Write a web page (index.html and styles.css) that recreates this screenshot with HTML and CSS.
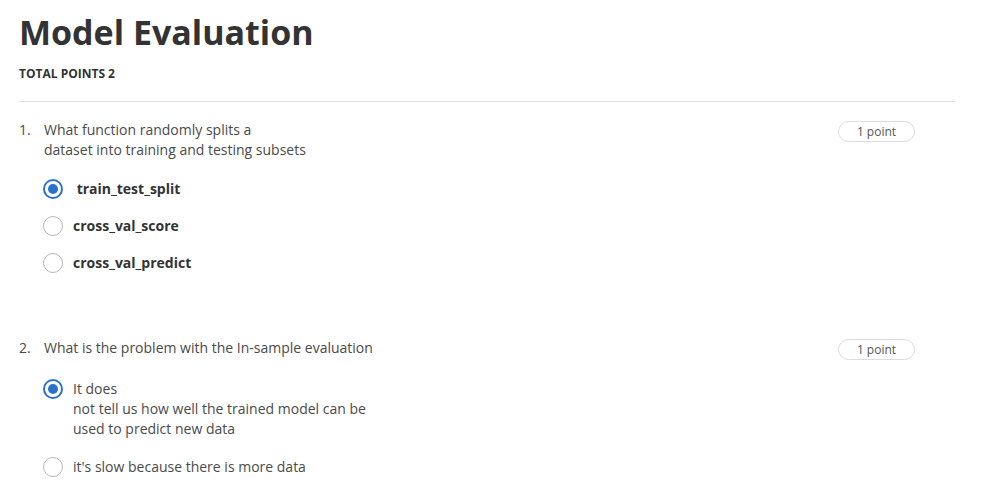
FILE: index.html
```html
<!DOCTYPE html>
<html lang="en">
<head>
<meta charset="utf-8">
<title>Model Evaluation</title>
<link rel="stylesheet" href="styles.css">
</head>
<body>
<main class="page">
  <header class="header">
    <h1 class="title">Model Evaluation</h1>
    <div class="total">TOTAL POINTS 2</div>
  </header>
  <hr class="divider">

  <section class="question q1">
    <div class="q-body">
      <div class="q-head">
        <span class="q-num">1.</span>
        <span class="q-text">What function randomly splits a<br>dataset into training and testing subsets</span>
      </div>
      <div class="options">
        <div class="option">
          <span class="radio checked"></span>
          <span class="opt-text bold">&nbsp;train_test_split</span>
        </div>
        <div class="option">
          <span class="radio"></span>
          <span class="opt-text bold">cross_val_score</span>
        </div>
        <div class="option">
          <span class="radio"></span>
          <span class="opt-text bold">cross_val_predict</span>
        </div>
      </div>
    </div>
    <div class="pill">1 point</div>
  </section>

  <section class="question q2">
    <div class="q-body">
      <div class="q-head">
        <span class="q-num">2.</span>
        <span class="q-text">What is the problem with the In-sample evaluation</span>
      </div>
      <div class="options">
        <div class="option">
          <span class="radio checked"></span>
          <span class="opt-text">It does<br>not tell us how well the trained model can be<br>used to predict new data</span>
        </div>
        <div class="option">
          <span class="radio"></span>
          <span class="opt-text">it's slow because there is more data</span>
        </div>
      </div>
    </div>
    <div class="pill">1 point</div>
  </section>
</main>
</body>
</html>
```

FILE: styles.css
```css
html, body {
  margin: 0;
  padding: 0;
  background: #ffffff;
}

body {
  font-family: "Open Sans", "Liberation Sans", sans-serif;
  color: #333333;
}

.page {
  padding: 10px 0 0 19px;
  width: 936px;
}

.title {
  margin: 0;
  font-size: 34px;
  font-weight: 700;
  line-height: 44px;
  color: #333333;
}

.total {
  margin-top: 12px;
  font-size: 12px;
  font-weight: 700;
  line-height: 16px;
  color: #333333;
}

.divider {
  margin: 19px 0 0 0;
  border: 0;
  border-top: 1px solid #dddddd;
  height: 0;
}

.question {
  display: flex;
  justify-content: space-between;
  align-items: flex-start;
  width: 896px;
}

.q1 {
  margin-top: 18px;
}

.q2 {
  margin-top: 47px;
}

.q-head {
  display: flex;
  font-size: 14px;
  line-height: 20px;
  color: #4a4a4a;
}

.q-num {
  width: 25px;
}

.options {
  display: flex;
  flex-direction: column;
  gap: 17px;
  padding: 19px 0 18px 24px;
}

.q2 .options {
  padding-top: 21px;
  gap: 18px;
}

.option {
  display: flex;
  align-items: flex-start;
  gap: 10px;
  font-size: 14px;
  line-height: 20px;
  color: #333333;
}

.opt-text {
  color: #4a4a4a;
}

.opt-text.bold {
  font-weight: 700;
  color: #333333;
}

.radio {
  box-sizing: border-box;
  flex: 0 0 auto;
  width: 20px;
  height: 20px;
  border-radius: 50%;
  border: 1.5px solid #b8b8b8;
  background: #ffffff;
  position: relative;
}

.radio.checked {
  border: 2px solid #2a73cc;
}

.radio.checked::after {
  content: "";
  position: absolute;
  left: 3px;
  top: 3px;
  width: 10px;
  height: 10px;
  border-radius: 50%;
  background: #2a73cc;
}

.pill {
  box-sizing: border-box;
  width: 77px;
  height: 21px;
  margin-top: 1px;
  border: 1px solid #dcdcdc;
  border-radius: 11px;
  font-size: 12px;
  line-height: 19px;
  text-align: center;
  color: #555555;
}
```
